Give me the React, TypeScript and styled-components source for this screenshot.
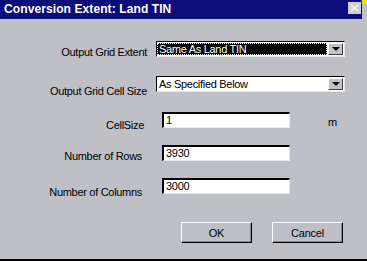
import React from 'react';
import styled, { createGlobalStyle } from 'styled-components';

const GlobalStyle = createGlobalStyle`
  html, body {
    margin: 0;
    padding: 0;
    background: #bfbfc6;
  }
  body {
    width: 367px;
    height: 261px;
    overflow: hidden;
    font-family: "Liberation Sans", Arial, sans-serif;
  }
`;

const Window = styled.div`
  position: relative;
  width: 367px;
  height: 261px;
  box-sizing: border-box;
  background: #bfbfc6;
  border-bottom: 2px solid #000;
  display: flex;
  flex-direction: column;
`;

const TitleBar = styled.div`
  height: 19px;
  margin-right: 5px;
  background: #0c0c7a;
  display: flex;
  align-items: center;
  justify-content: space-between;
  padding-left: 4px;
`;

const Title = styled.span`
  color: #fff;
  font-weight: bold;
  font-size: 12px;
  letter-spacing: 0.1px;
  line-height: 19px;
`;

const CloseBtn = styled.div`
  width: 13px;
  height: 12px;
  margin-top: -3px;
  margin-right: 1px;
  background: #cfcfd4;
  display: flex;
  align-items: center;
  justify-content: center;
`;

// little yellow/red marker in the very corner
const Corner = styled.span`
  position: absolute;
  top: 0;
  right: 0;
  width: 5px;
  height: 4px;
  background: #f0e000;
  border-left: 1px solid #d00000;
`;

const Body = styled.div`
  padding-top: 22px;
  display: flex;
  flex-direction: column;
`;

const Row = styled.div<{ $gap: number }>`
  display: flex;
  align-items: flex-start;
  margin-top: ${p => p.$gap}px;
  height: 16px;
`;

const Label = styled.div<{ $drop: number; $inset: number }>`
  width: 147px;
  box-sizing: border-box;
  padding-right: ${p => p.$inset}px;
  margin-top: ${p => p.$drop}px;
  text-align: right;
  font-size: 11px;
  line-height: 12px;
  letter-spacing: -0.3px;
  color: #000;
  white-space: nowrap;
`;

const Select = styled.div`
  margin-left: 9px;
  width: 189px;
  height: 16px;
  box-sizing: border-box;
  background: #fff;
  border-top: 1px solid #000;
  border-left: 1px solid #000;
  border-bottom: 1px solid #e8e8e8;
  border-right: 1px solid #e8e8e8;
  display: flex;
  align-items: stretch;
  padding: 1px 1px 1px 0;
`;

const SelectText = styled.div<{ $active?: boolean }>`
  flex: 1;
  font-size: 11px;
  line-height: 12px;
  letter-spacing: -0.3px;
  padding-left: 2px;
  color: ${p => (p.$active ? '#fff' : '#000')};
  background: ${p => (p.$active ? '#000' : 'transparent')};
  outline: ${p => (p.$active ? '1px dotted #fff' : 'none')};
  outline-offset: -1px;
  margin-right: 1px;
`;

const ArrowBtn = styled.div`
  width: 15px;
  box-sizing: border-box;
  background: #c4c4c8;
  border-top: 1px solid #fff;
  border-left: 1px solid #fff;
  border-bottom: 1px solid #404040;
  border-right: 1px solid #404040;
  display: flex;
  align-items: center;
  justify-content: center;
`;

const Arrow = styled.span`
  width: 0;
  height: 0;
  border-left: 4px solid transparent;
  border-right: 4px solid transparent;
  border-top: 4px solid #000;
`;

const Input = styled.div`
  margin-left: 15px;
  width: 128px;
  height: 16px;
  box-sizing: border-box;
  background: #fff;
  border-top: 2px solid #000;
  border-left: 2px solid #000;
  border-bottom: 1px solid #e8e8e8;
  border-right: 1px solid #e8e8e8;
  font-size: 11px;
  line-height: 13px;
  padding-left: 2px;
  letter-spacing: -0.3px;
  color: #000;
`;

const Unit = styled.span`
  margin-left: 38px;
  margin-top: 4px;
  font-size: 11px;
  line-height: 12px;
`;

const Buttons = styled.div`
  display: flex;
  gap: 20px;
  margin-top: 28px;
  padding-left: 181px;
`;

const Button = styled.div`
  width: 71px;
  height: 21px;
  box-sizing: border-box;
  border-top: 1px solid #fff;
  border-left: 1px solid #fff;
  border-bottom: 1px solid #000;
  border-right: 1px solid #000;
  box-shadow: inset -1px -1px 0 #8a8a8e;
  display: flex;
  align-items: center;
  justify-content: center;
  font-size: 11px;
  letter-spacing: -0.2px;
  color: #000;
`;

export default function App() {
  return (
    <>
      <GlobalStyle />
      <Window>
        <TitleBar>
          <Title>Conversion Extent: Land TIN</Title>
          <CloseBtn>
            <svg width="9" height="8" viewBox="0 0 9 8">
              <path d="M1 1 L8 7 M8 1 L1 7" stroke="#f4f4f4" strokeWidth="1.4" />
            </svg>
          </CloseBtn>
        </TitleBar>
        <Corner />
        <Body>
          <Row $gap={0}>
            <Label $drop={5} $inset={0}>Output Grid Extent</Label>
            <Select>
              <SelectText $active>Same As Land TIN</SelectText>
              <ArrowBtn><Arrow /></ArrowBtn>
            </Select>
          </Row>
          <Row $gap={19}>
            <Label $drop={9} $inset={0}>Output Grid Cell Size</Label>
            <Select>
              <SelectText>As Specified Below</SelectText>
              <ArrowBtn><Arrow /></ArrowBtn>
            </Select>
          </Row>
          <Row $gap={20}>
            <Label $drop={7} $inset={3}>CellSize</Label>
            <Input>1</Input>
            <Unit>m</Unit>
          </Row>
          <Row $gap={17}>
            <Label $drop={5} $inset={5}>Number of Rows</Label>
            <Input>3930</Input>
          </Row>
          <Row $gap={17}>
            <Label $drop={8} $inset={5}>Number of Columns</Label>
            <Input>3000</Input>
          </Row>
          <Buttons>
            <Button>OK</Button>
            <Button>Cancel</Button>
          </Buttons>
        </Body>
      </Window>
    </>
  );
}
